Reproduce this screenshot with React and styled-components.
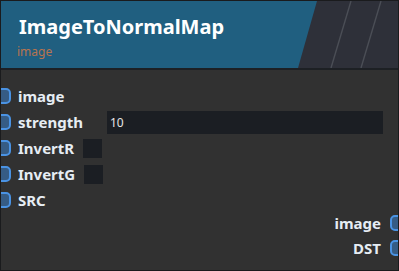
import React from "react";
import styled, { createGlobalStyle } from "styled-components";

const Global = createGlobalStyle`
  html, body { margin: 0; padding: 0; background: #1c1c1c; }
  body { width: 399px; height: 271px; overflow: hidden; font-family: "Noto Sans", "DejaVu Sans", sans-serif; }
`;

const Node = styled.div`
  width: 397px;
  height: 269px;
  border: 1px solid #1a1b1d;
  background: #313131;
  display: flex;
  flex-direction: column;
  overflow: hidden;
  position: relative;
`;

const Header = styled.div`
  position: relative;
  height: 69px;
  border-bottom: 2px solid #1d2024;
  background: #205f80;
  padding: 12px 0 0 18px;
  box-sizing: border-box;
  display: flex;
  flex-direction: column;
`;

const HeaderArt = styled.svg`
  position: absolute;
  inset: 0;
  width: 100%;
  height: 100%;
`;

const Title = styled.div`
  position: relative;
  color: #ffffff;
  font-size: 20px;
  font-weight: 700;
  line-height: 28px;
`;

const Subtitle = styled.div`
  position: relative;
  color: #b9744f;
  font-size: 12px;
  line-height: 16px;
  margin: 3px 0 0 -2px;
`;

const Body = styled.div`
  display: flex;
  flex-direction: column;
  padding-top: 14px;
`;

const Inputs = styled.div`
  display: flex;
  flex-direction: column;
  gap: 2px;
`;

const Outputs = styled.div`
  display: flex;
  flex-direction: column;
  gap: 1px;
  margin-top: -1px;
`;

const Row = styled.div`
  position: relative;
  height: 24px;
  display: flex;
  align-items: center;
  justify-content: ${(p) => (p.$out ? "flex-end" : "flex-start")};
  padding: ${(p) => (p.$out ? "0 17px 0 0" : "0 0 0 17px")};
`;

const Socket = styled.span`
  position: absolute;
  top: 4px;
  ${(p) => (p.$out ? "right: -10px;" : "left: -8px;")}
  width: 14px;
  height: 12px;
  border: 2px solid #4a93e4;
  border-radius: 5px;
  background: #365c85;
`;

const Label = styled.span`
  color: #e6edf4;
  font-size: 15px;
  font-weight: 700;
  line-height: 20px;
  flex: none;
`;

const TextInput = styled.div`
  width: 273px;
  height: 23px;
  margin-left: ${(p) => p.$ml}px;
  background: #1b1e23;
  color: #e6e6e6;
  font-size: 12px;
  line-height: 23px;
  padding-left: 3px;
  box-sizing: content-box;
`;

const Check = styled.span`
  width: 19px;
  height: 19px;
  background: #1b1e23;
  margin-left: ${(p) => p.$ml}px;
`;

export default function App() {
  return (
    <>
      <Global />
      <Node>
        <Header>
          <HeaderArt viewBox="0 0 397 69" preserveAspectRatio="none">
            <polygon points="316,0 397,0 397,69 297,69" fill="#2e3039" />
            <line x1="350" y1="0" x2="330" y2="69" stroke="#4b4e56" strokeWidth="1.4" />
            <line x1="380" y1="0" x2="360" y2="69" stroke="#4b4e56" strokeWidth="1.4" />
          </HeaderArt>
          <Title>ImageToNormalMap</Title>
          <Subtitle>image</Subtitle>
        </Header>
        <Body>
          <Inputs>
            <Row>
              <Socket />
              <Label>image</Label>
            </Row>
            <Row>
              <Socket />
              <Label>strength</Label>
              <TextInput $ml={24}>10</TextInput>
            </Row>
            <Row>
              <Socket />
              <Label>InvertR</Label>
              <Check $ml={9} />
            </Row>
            <Row>
              <Socket />
              <Label>InvertG</Label>
              <Check $ml={9} />
            </Row>
            <Row>
              <Socket />
              <Label>SRC</Label>
            </Row>
          </Inputs>
          <Outputs>
            <Row $out>
              <Label>image</Label>
              <Socket $out />
            </Row>
            <Row $out>
              <Label>DST</Label>
              <Socket $out />
            </Row>
          </Outputs>
        </Body>
      </Node>
    </>
  );
}
